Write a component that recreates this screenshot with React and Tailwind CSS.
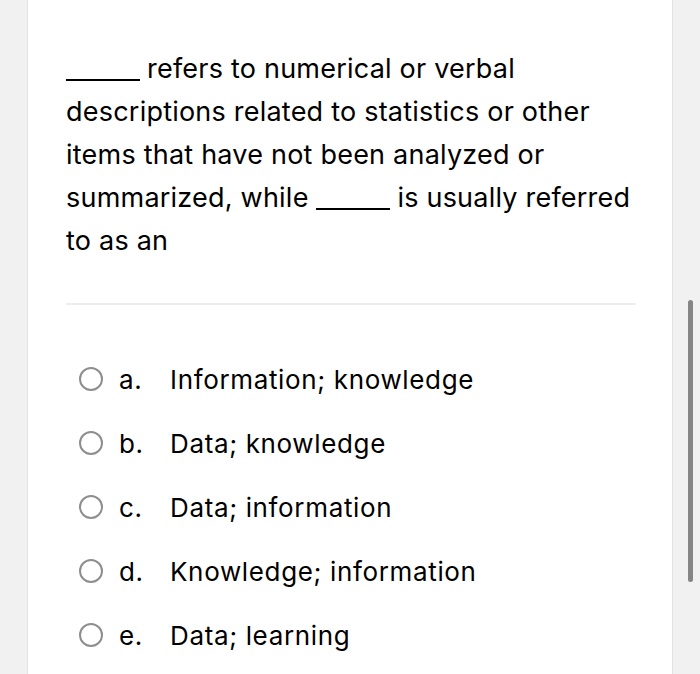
import React from 'react';

const options = [
  { key: 'a.', label: 'Information; knowledge' },
  { key: 'b.', label: 'Data; knowledge' },
  { key: 'c.', label: 'Data; information' },
  { key: 'd.', label: 'Knowledge; information' },
  { key: 'e.', label: 'Data; learning' },
];

function Blank() {
  return <span className="inline-block w-[74px] h-[2px] bg-black mb-[-3px] mr-[7px]" />;
}

export default function App() {
  return (
    <div className="flex h-[674px] overflow-hidden bg-[#f1f1f2] text-black" style={{ fontFamily: 'Inter, "Liberation Sans", sans-serif' }}>
      <div className="w-[27px] shrink-0" />

      {/* Question card */}
      <div className="w-[646px] shrink-0 bg-white border-x border-[#e2e2e6] pl-[38px] pr-[36px] pt-[47px]">
        <p className="text-[27px] leading-[43px] tracking-[0.22px] whitespace-nowrap">
          <Blank />refers to numerical or verbal
          <br />
          descriptions related to statistics or other
          <br />
          items that have not been analyzed or
          <br />
          summarized, while <Blank />is usually referred
          <br />
          to as an
        </p>

        <div className="mt-[41px] h-[2px] bg-[#ededf0]" />

        <div className="mt-[42px]">
          {options.map((opt) => (
            <div key={opt.key} className="flex items-center h-[64px] text-[26px] tracking-[0.65px]">
              <span className="ml-[13px] w-[24px] h-[24px] rounded-full border-2 border-[#8e8e8e] shrink-0" />
              <span className="ml-[16px] w-[51px]">{opt.key}</span>
              <span>{opt.label}</span>
            </div>
          ))}
        </div>
      </div>

      {/* Scrollbar strip */}
      <div className="flex-1 pt-[300px]">
        <div className="ml-[15px] w-[5px] h-[282px] rounded-full bg-[#858585]" />
      </div>
    </div>
  );
}
